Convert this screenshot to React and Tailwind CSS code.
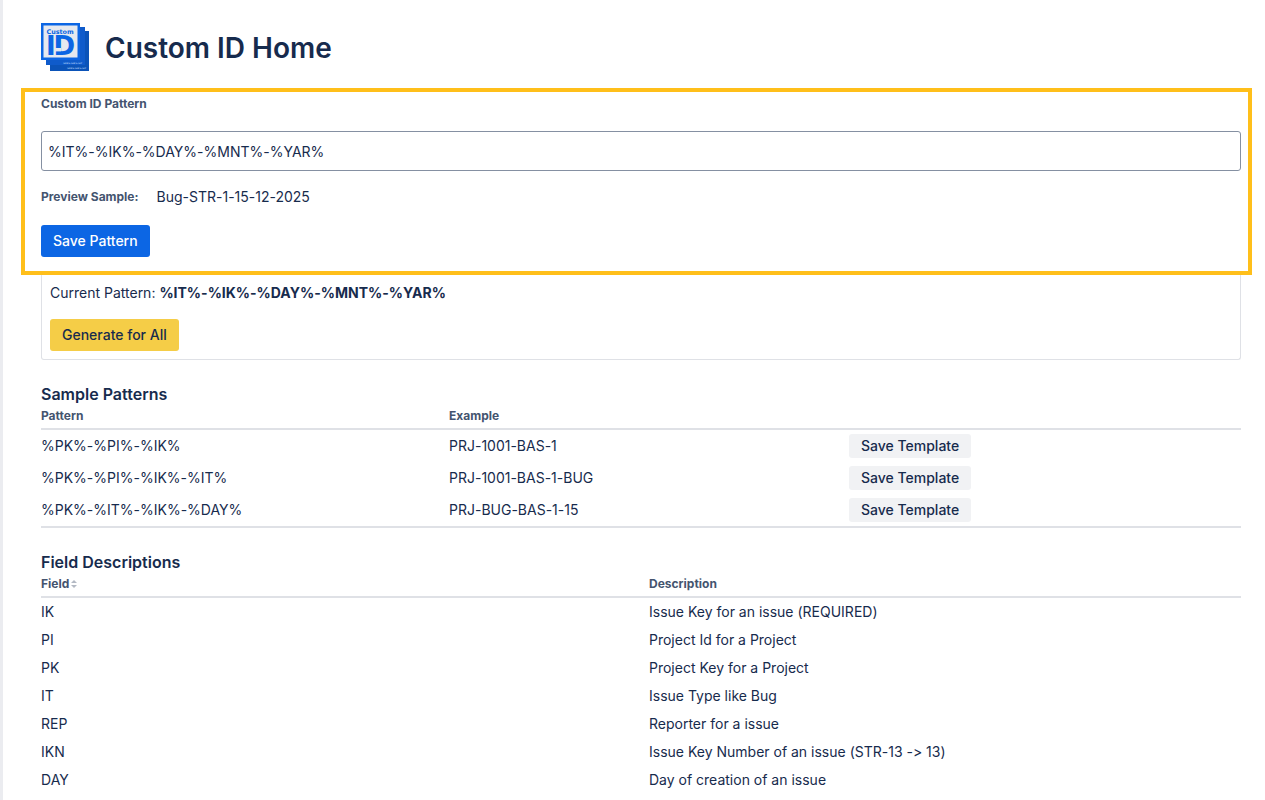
// src/App.jsx
import React, { useState } from 'react';

const samplePatterns = [
  { pattern: '%PK%-%PI%-%IK%', example: 'PRJ-1001-BAS-1' },
  { pattern: '%PK%-%PI%-%IK%-%IT%', example: 'PRJ-1001-BAS-1-BUG' },
  { pattern: '%PK%-%IT%-%IK%-%DAY%', example: 'PRJ-BUG-BAS-1-15' },
];

const fields = [
  { field: 'IK', description: 'Issue Key for an issue (REQUIRED)' },
  { field: 'PI', description: 'Project Id for a Project' },
  { field: 'PK', description: 'Project Key for a Project' },
  { field: 'IT', description: 'Issue Type like Bug' },
  { field: 'REP', description: 'Reporter for a issue' },
  { field: 'IKN', description: 'Issue Key Number of an issue (STR-13 -> 13)' },
  { field: 'DAY', description: 'Day of creation of an issue' },
];

// Three stacked cards, the front one carries the product name
const Logo = () => (
  <svg className="size-12 shrink-0 font-['DejaVu_Sans',sans-serif] font-bold" viewBox="0 0 48 48" aria-hidden="true">
    <rect x="9" y="8" width="39" height="40" fill="#0b53b8" />
    <rect x="5" y="4" width="39" height="38" fill="#0f5bcb" />
    <rect width="39" height="37" fill="#0c66e4" />
    <rect x="2.5" y="2.5" width="34" height="32" fill="#e6e9ef" />
    <text x="5.5" y="10.5" fontSize="6.4" fill="#0c66e4">Custom</text>
    <text y="32" fontSize="26" fill="#0c66e4">
      <tspan x="5">I</tspan>
      <tspan x="12.6">D</tspan>
    </text>
    {/* notch that splits the D from its stem */}
    <rect x="14" y="25" width="6" height="3.4" fill="#e6e9ef" />
    <text x="22" y="41" fontSize="2" fill="#a9c8f5">%PK%-%IK%-%IT</text>
    <text x="26" y="46" fontSize="2" fill="#a9c8f5">%PK%-%IK%-%IT</text>
  </svg>
);

const SortIcon = () => (
  <svg className="h-2 w-1.5" viewBox="0 0 6 8" fill="#b3b9c4" aria-hidden="true">
    <path d="M3 0 L6 3 H0 Z" />
    <path d="M0 5 H6 L3 8 Z" />
  </svg>
);

const App = () => {
  const [pattern, setPattern] = useState('%IT%-%IK%-%DAY%-%MNT%-%YAR%');

  return (
    <div className="min-h-screen border-l-[3px] border-[#ebecf0] bg-white pt-[23px] font-['Inter',sans-serif] text-sm text-[#172b4d] [font-feature-settings:'calt'_0]">
      <header className="flex items-center gap-4 pl-[38px]">
        <Logo />
        <h1 className="pt-0.5 text-[28px] leading-8 font-semibold">Custom ID Home</h1>
      </header>

      <main className="mt-[17px] pr-6 pb-2 pl-[38px]">
        {/* Pattern editor */}
        <section className="-mr-[11px] -ml-5 border-4 border-[#ffbf1a] px-4 pr-[7px] pb-[14px]">
          <label htmlFor="pattern" className="block pt-[3px] text-xs leading-[18px] font-bold text-[#44546f]">
            Custom ID Pattern
          </label>
          <input
            id="pattern"
            type="text"
            value={pattern}
            onChange={(e) => setPattern(e.target.value)}
            className="mt-[18px] block h-10 w-full rounded-[3px] border border-[#8590a2] bg-white px-[6px] text-sm outline-none"
          />
          <div className="mt-4 flex items-center gap-[18px] leading-5">
            <span className="text-xs leading-5 font-bold text-[#44546f]">Preview Sample:</span>
            <span>Bug-STR-1-15-12-2025</span>
          </div>
          <button type="button" className="mt-[18px] block h-8 rounded-[3px] bg-[#0c66e4] px-3 font-medium text-white">
            Save Pattern
          </button>
        </section>

        {/* Active pattern */}
        <section className="rounded-b-[3px] border border-t-0 border-[#dfe1e6] px-2 pt-2 pb-2">
          <p className="leading-5">
            Current Pattern: <strong className="font-bold">%IT%-%IK%-%DAY%-%MNT%-%YAR%</strong>
          </p>
          <button type="button" className="mt-4 block h-8 rounded-[3px] bg-[#f5cd47] px-3 font-medium">
            Generate for All
          </button>
        </section>

        <h2 className="mt-6 text-base leading-5 font-semibold">Sample Patterns</h2>
        <table className="w-full table-fixed border-separate border-spacing-0 border-b-2 border-[#dfe1e6] text-left">
          <thead className="text-xs text-[#44546f]">
            <tr className="h-[26px]">
              <th className="border-b-2 border-[#dfe1e6] pr-2 font-bold">Pattern</th>
              <th className="border-b-2 border-[#dfe1e6] px-2 font-bold">Example</th>
              <th className="border-b-2 border-[#dfe1e6] px-2" />
            </tr>
          </thead>
          <tbody>
            {samplePatterns.map((row) => (
              <tr key={row.pattern} className="h-8">
                <td className="pr-2">{row.pattern}</td>
                <td className="px-2">{row.example}</td>
                <td className="px-2">
                  <button type="button" className="block h-6 rounded-[3px] bg-[#f1f2f4] px-3 font-medium">
                    Save Template
                  </button>
                </td>
              </tr>
            ))}
          </tbody>
        </table>

        <h2 className="mt-6 text-base leading-5 font-semibold">Field Descriptions</h2>
        <table className="w-full table-fixed border-separate border-spacing-0 text-left">
          <thead className="text-xs text-[#44546f]">
            <tr className="h-[26px]">
              <th className="border-b-2 border-[#dfe1e6] pr-2 font-bold">
                <span className="flex items-center gap-0.5">
                  Field
                  <SortIcon />
                </span>
              </th>
              <th className="border-b-2 border-[#dfe1e6] px-2 font-bold">Description</th>
            </tr>
          </thead>
          <tbody>
            {fields.map((row) => (
              <tr key={row.field} className="h-7">
                <td className="pr-2">{row.field}</td>
                <td className="px-2">{row.description}</td>
              </tr>
            ))}
          </tbody>
        </table>
      </main>
    </div>
  );
};

export default App;
